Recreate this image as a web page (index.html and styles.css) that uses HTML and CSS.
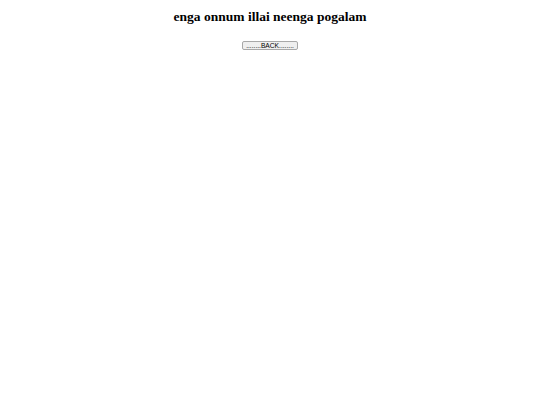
FILE: index.html
```html
<!DOCTYPE html>
<html>
<head>
<meta charset="utf-8">
<link rel="stylesheet" href="styles.css">
</head>
<body>
<div class="page">
  <h1 class="title">enga onnum illai neenga pogalam</h1>
  <div class="actions">
    <button class="back">........BACK........</button>
  </div>
</div>
</body>
</html>
```
FILE: styles.css
```css
html, body {
  margin: 0;
  padding: 0;
  background: #ffffff;
}
.page {
  padding-top: 8px;
  text-align: center;
}
.title {
  margin: 0;
  font-family: "Liberation Serif", "Times New Roman", serif;
  font-weight: bold;
  font-size: 13.5px;
  line-height: 17px;
  color: #000;
}
.actions {
  margin-top: 16px;
  line-height: 0;
}
.back {
  font-family: "Liberation Sans", Arial, sans-serif;
  font-size: 6.67px;
  line-height: 7px;
  height: 9px;
  padding: 0 3px;
  border: 1px solid #a8a8a8;
  border-radius: 2px;
  background: #efefef;
  color: #000;
  vertical-align: top;
}
```
